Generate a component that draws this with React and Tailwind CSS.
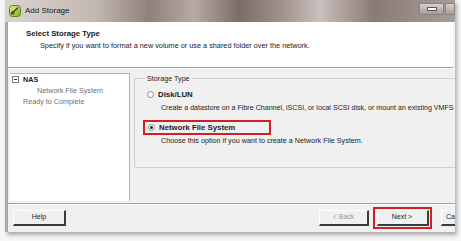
import React from "react";

const TitleIcon = () => (
    <svg width="12" height="12" viewBox="0 0 12 12">
        <defs>
            <linearGradient id="ic" x1="0" y1="0" x2="1" y2="1">
                <stop offset="0" stopColor="#e8f08a" />
                <stop offset="1" stopColor="#7fae2a" />
            </linearGradient>
        </defs>
        <rect x="0.5" y="0.5" width="11" height="11" rx="3" fill="url(#ic)" stroke="#5d7f1c" />
        <path d="M3 8.5 L8.5 3" stroke="#4a4a2a" strokeWidth="1.6" strokeLinecap="round" />
        <circle cx="3.6" cy="8" r="1.4" fill="none" stroke="#4a4a2a" strokeWidth="1" />
    </svg>
);

const Radio = ({ checked }) => (
    <span className="w-[7px] h-[7px] rounded-full border border-[#8a8a8a] bg-white flex items-center justify-center shrink-0">
        {checked && <span className="w-[3px] h-[3px] rounded-full bg-[#222]" />}
    </span>
);

const Btn = ({ children, disabled, className = "" }) => (
    <div
        className={`h-[16px] shrink-0 flex items-center justify-center bg-[#f0f0f0] border-t border-l border-t-white border-l-white border-b-2 border-r-2 border-b-[#3c3c3c] border-r-[#3c3c3c] text-[7px] ${
            disabled ? "text-[#9a9a9a]" : "text-[#222]"
        } ${className}`}
    >
        {children}
    </div>
);

export default function App() {
    return (
        <div className="w-[461px] h-[241px] overflow-hidden bg-[#f6f6f6] font-['Liberation_Sans',Arial,sans-serif]">
            <div className="ml-[5px] w-[450px] h-[232px] flex flex-col overflow-hidden shadow-[2px_3px_4px_rgba(0,0,0,0.3)]">
                {/* title bar */}
                <div className="h-[22px] shrink-0 flex items-center pl-[4px] gap-[4px] bg-[linear-gradient(90deg,#d9d3d0_0%,#c4b8b4_20%,#8f807c_32%,#b6aaa6_42%,#7d6c68_52%,#a39490_62%,#c9bfbc_70%,#8a7a76_82%,#a89c98_100%)]">
                    <TitleIcon />
                    <span className="text-[8px] text-[#1a1a1a]">Add Storage</span>
                    <div className="ml-auto flex items-start self-start">
                        <div className="w-[25px] h-[12px] mt-[3px] rounded-[2px] border border-[#8d8280] bg-[linear-gradient(#d8d2d0,#a59a97)] flex items-center justify-center">
                            <span className="w-[8px] h-[2px] bg-white border border-[#555] box-content" />
                        </div>
                        <div className="w-[10px] h-[12px] mt-[3px] ml-[1px] rounded-l-[2px] border border-[#8d8280] bg-[linear-gradient(#d8d2d0,#a59a97)]" />
                    </div>
                </div>

                {/* content */}
                <div className="flex-1 flex flex-col border-l-[3px] border-[#b3a39c] bg-[#f0f0f0] overflow-hidden">
                    {/* header */}
                    <div className="h-[46px] shrink-0 bg-white border-b border-[#a0a0a0] pl-[18px] pt-[7px] mr-[2px]">
                        <div className="text-[7.8px] font-bold text-[#1a1a1a] leading-[9px]">Select Storage Type</div>
                        <div className="text-[7.3px] text-[#222] leading-[9px] mt-[3px] pl-[14px] whitespace-nowrap">
                            Specify if you want to format a new volume or use a shared folder over the network.
                        </div>
                    </div>

                    {/* body */}
                    <div className="flex-1 flex border-t border-white overflow-hidden">
                        <div className="w-[120px] shrink-0 ml-[2px] mt-[4px] mb-[2px] bg-white border-t border-r border-[#b5b5b5] text-[7.2px] leading-[11px] whitespace-nowrap">
                            <div className="flex items-center gap-[4px] pl-[2px]">
                                <span className="w-[7px] h-[7px] border border-[#7a7a7a] flex items-center justify-center">
                                    <span className="w-[3px] h-px bg-[#333]" />
                                </span>
                                <span className="font-bold text-[#1a1a1a]">NAS</span>
                            </div>
                            <div className="pl-[27px] text-[#707070]">Network File System</div>
                            <div className="pl-[13px] text-[#707070]">Ready to Complete</div>
                        </div>

                        <div className="flex-1 pl-[4px] pt-[5px] overflow-hidden">
                            <fieldset className="w-[340px] h-[94px] border border-[#cfcfcf] rounded-[2px] px-[10px]">
                                <legend className="text-[7.2px] text-[#222] px-[2px] leading-[9px]">Storage Type</legend>
                                <div className="flex items-center gap-[4px] mt-[6px] pl-[2px]">
                                    <Radio />
                                    <span className="text-[7.8px] font-bold text-[#1a1a1a]">Disk/LUN</span>
                                </div>
                                <div className="text-[7.1px] text-[#222] whitespace-nowrap pl-[16px] mt-[2px]">
                                    Create a datastore on a Fibre Channel, iSCSI, or local SCSI disk, or mount an existing VMFS volume.
                                </div>
                                <div className="mt-[7px] -ml-[2px] w-[128px] h-[15px] border-2 border-[#d21f25] flex items-center gap-[4px] pl-[3px] whitespace-nowrap">
                                    <Radio checked />
                                    <span className="text-[7.8px] font-bold text-[#1a1a1a]">Network File System</span>
                                </div>
                                <div className="text-[7.2px] text-[#222] whitespace-nowrap pl-[16px] mt-[1px]">
                                    Choose this option if you want to create a Network File System.
                                </div>
                            </fieldset>
                        </div>
                    </div>

                    {/* footer */}
                    <div className="h-[29px] shrink-0 border-t border-[#a0a0a0] flex items-center relative">
                        <div className="absolute top-0 left-0 right-0 h-px bg-white" />
                        <Btn className="w-[53px] ml-[5px]">Help</Btn>
                        <Btn disabled className="w-[50px] ml-auto">&lt; Back</Btn>
                        <div className="w-[59px] h-[22px] shrink-0 ml-[4px] border-2 border-[#d21f25] flex items-center justify-center">
                            <Btn className="w-[52px]">Next &gt;</Btn>
                        </div>
                        <Btn className="w-[50px] ml-[9px] -mr-[36px] justify-start pl-[4px]">Cancel</Btn>
                    </div>
                </div>
            </div>
        </div>
    );
}
